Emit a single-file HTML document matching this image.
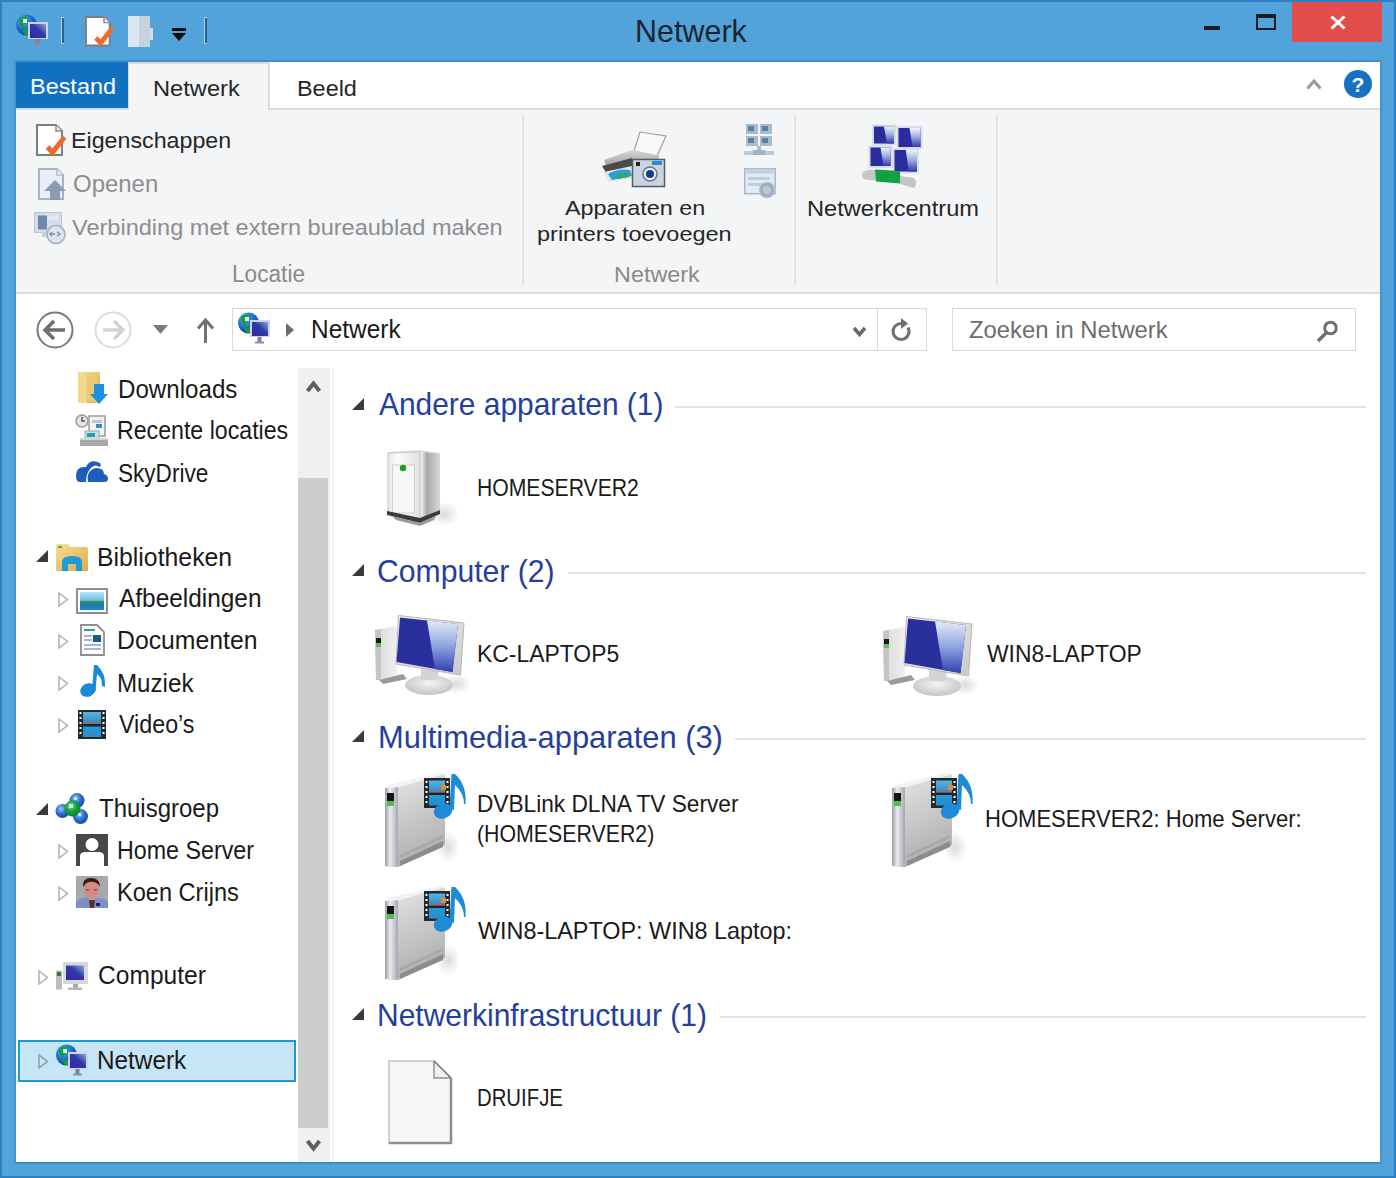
<!DOCTYPE html>
<html><head><meta charset="utf-8">
<style>
html,body{margin:0;padding:0;}
body{width:1396px;height:1178px;overflow:hidden;position:relative;background:#2d80c1;font-family:"Liberation Sans",sans-serif;}
.a{position:absolute;}
.t{position:absolute;white-space:nowrap;transform-origin:0 0;font-family:"Liberation Sans",sans-serif;}
svg{position:absolute;overflow:visible;}
</style></head><body>
<!-- frame -->
<div class="a" style="left:2px;top:2px;width:1392px;height:1174px;background:#52a3da"></div>
<!-- window content area -->
<div class="a" style="left:16px;top:62px;width:1364px;height:1100px;background:#fff"></div>
<div class="a" style="left:16px;top:1162px;width:1364px;height:2px;background:#3a8dcc"></div>
<div class="a" style="left:14px;top:60px;width:2px;height:1104px;background:#4393d0"></div>
<div class="a" style="left:1380px;top:60px;width:2px;height:1104px;background:#4393d0"></div>
<div class="a" style="left:16px;top:108px;width:112px;height:2px;background:#dcdfe1"></div>

<!-- close / max / min -->
<div class="a" style="left:1292px;top:2px;width:90px;height:40px;background:#e24e4b"></div>
<svg style="left:1330px;top:15px" width="16" height="15"><path d="M1.5 1.5 L14.5 13.5 M14.5 1.5 L1.5 13.5" stroke="#fff" stroke-width="3"/></svg>
<div class="a" style="left:1256px;top:14px;width:16px;height:10px;border:2px solid #1b1f24;border-top-width:4px"></div>
<div class="a" style="left:1204px;top:26px;width:16px;height:4px;background:#1b1f24"></div>

<!-- quick access separators -->
<div class="a" style="left:61px;top:17px;width:3px;height:27px;background:#a9d3ef"></div>
<div class="a" style="left:62px;top:18px;width:2px;height:25px;background:#2f5f86"></div>
<div class="a" style="left:204px;top:17px;width:3px;height:27px;background:#a9d3ef"></div>
<div class="a" style="left:205px;top:18px;width:2px;height:25px;background:#2f5f86"></div>
<!-- qat dropdown -->
<div class="a" style="left:172px;top:28px;width:14px;height:3px;background:#0d0d0d"></div>
<svg style="left:172px;top:33px" width="14" height="9"><path d="M0 0 H14 L7 8 Z" fill="#0d0d0d"/></svg>

<!-- tabs -->
<div class="a" style="left:16px;top:62px;width:112px;height:46px;background:#1270c0"></div>
<div class="a" style="left:16px;top:60px;width:1364px;height:2px;background:#3f8fcd"></div>
<div class="a" style="left:128px;top:62px;width:142px;height:48px;background:#dadbdc"></div>
<div class="a" style="left:129px;top:64px;width:139px;height:46px;background:#f4f5f7"></div>
<div class="a" style="left:270px;top:108px;width:1110px;height:2px;background:#dadbdc"></div>
<!-- collapse + help -->
<svg style="left:1306px;top:77px" width="16" height="13"><path d="M1.5 11.5 L8 4 L14.5 11.5" stroke="#9a9a9a" stroke-width="3" fill="none"/></svg>
<svg style="left:1344px;top:70px" width="28" height="28"><circle cx="14" cy="14" r="14" fill="#1671c0"/><text x="14" y="22" font-family="Liberation Sans" font-weight="bold" font-size="21" fill="#fff" text-anchor="middle">?</text></svg>

<!-- ribbon body -->
<div class="a" style="left:16px;top:110px;width:1364px;height:182px;background:#f4f5f7"></div>
<div class="a" style="left:16px;top:292px;width:1364px;height:2px;background:#dcdddf"></div>
<div class="a" style="left:522px;top:114px;width:2px;height:172px;background:#e3e4e6"></div>
<div class="a" style="left:794px;top:114px;width:2px;height:172px;background:#e3e4e6"></div>
<div class="a" style="left:996px;top:114px;width:2px;height:172px;background:#e3e4e6"></div>

<!-- address row -->
<div class="a" style="left:232px;top:308px;width:693px;height:41px;border:1px solid #d9d9d9;background:#fff"></div>
<div class="a" style="left:877px;top:309px;width:1px;height:41px;background:#d9d9d9"></div>
<div class="a" style="left:952px;top:308px;width:402px;height:41px;border:1px solid #d9d9d9;background:#fff"></div>
<!-- back / forward -->
<svg style="left:36px;top:311px" width="38" height="38"><circle cx="19" cy="19" r="17.5" stroke="#7a7a7a" stroke-width="2" fill="none"/><path d="M9 19 H29 M18 10 L9 19 L18 28" stroke="#6e6e6e" stroke-width="3.5" fill="none"/></svg>
<svg style="left:94px;top:311px" width="38" height="38"><circle cx="19" cy="19" r="17.5" stroke="#dcdcdc" stroke-width="2" fill="none"/><path d="M9 19 H29 M20 10 L29 19 L20 28" stroke="#d4d4d4" stroke-width="3.5" fill="none"/></svg>
<svg style="left:153px;top:325px" width="15" height="9"><path d="M0 0 H15 L7.5 9 Z" fill="#7b7b7b"/></svg>
<svg style="left:196px;top:318px" width="19" height="25"><path d="M9.5 3 V25 M2 10.5 L9.5 2 L17 10.5" stroke="#717171" stroke-width="3" fill="none"/></svg>
<svg style="left:285px;top:323px" width="10" height="14"><path d="M1 0 L9 7 L1 14 Z" fill="#6c6c6c"/></svg>
<svg style="left:852px;top:326px" width="15" height="11"><path d="M2 2 L7.5 8.5 L13 2" stroke="#6a6a6a" stroke-width="3.5" fill="none"/></svg>
<svg style="left:891px;top:318px" width="22" height="24"><path d="M17 9.5 A8 8 0 1 1 11 5.5" stroke="#707070" stroke-width="3" fill="none"/><path d="M10 0 L17 5.5 L10 11 Z" fill="#707070"/></svg>
<svg style="left:1316px;top:320px" width="23" height="22"><circle cx="14.5" cy="8" r="5.8" stroke="#707070" stroke-width="3" fill="none"/><path d="M10.5 12.5 L2 21" stroke="#707070" stroke-width="3.5"/></svg>

<!-- nav scrollbar -->
<div class="a" style="left:298px;top:368px;width:32px;height:794px;background:#f0f0f0"></div>
<div class="a" style="left:298px;top:478px;width:30px;height:650px;background:#cdcdcd"></div>
<div class="a" style="left:332px;top:368px;width:2px;height:794px;background:#f4f4f4"></div>
<svg style="left:306px;top:380px" width="15" height="12"><path d="M1.5 11 L7.5 3.5 L13.5 11" stroke="#5f5f5f" stroke-width="4" fill="none"/></svg>
<svg style="left:306px;top:1140px" width="15" height="12"><path d="M1.5 1 L7.5 8.5 L13.5 1" stroke="#5f5f5f" stroke-width="4" fill="none"/></svg>

<!-- selection -->
<div class="a" style="left:18px;top:1040px;width:274px;height:38px;background:#c6e5f6;border:2px solid #1e97d4"></div>

<!-- nav triangles -->
<svg style="left:36px;top:550px" width="12" height="12"><path d="M12 0 V12 H0 Z" fill="#3a3a3a"/></svg>
<svg style="left:36px;top:803px" width="12" height="12"><path d="M12 0 V12 H0 Z" fill="#3a3a3a"/></svg>
<svg style="left:58px;top:592px" width="11" height="15"><path d="M1 1 L9.5 7.5 L1 14 Z" stroke="#b0b0b0" stroke-width="1.5" fill="none"/></svg>
<svg style="left:58px;top:634px" width="11" height="15"><path d="M1 1 L9.5 7.5 L1 14 Z" stroke="#b0b0b0" stroke-width="1.5" fill="none"/></svg>
<svg style="left:58px;top:676px" width="11" height="15"><path d="M1 1 L9.5 7.5 L1 14 Z" stroke="#b0b0b0" stroke-width="1.5" fill="none"/></svg>
<svg style="left:58px;top:718px" width="11" height="15"><path d="M1 1 L9.5 7.5 L1 14 Z" stroke="#b0b0b0" stroke-width="1.5" fill="none"/></svg>
<svg style="left:58px;top:844px" width="11" height="15"><path d="M1 1 L9.5 7.5 L1 14 Z" stroke="#b0b0b0" stroke-width="1.5" fill="none"/></svg>
<svg style="left:58px;top:886px" width="11" height="15"><path d="M1 1 L9.5 7.5 L1 14 Z" stroke="#b0b0b0" stroke-width="1.5" fill="none"/></svg>
<svg style="left:38px;top:970px" width="11" height="15"><path d="M1 1 L9.5 7.5 L1 14 Z" stroke="#b0b0b0" stroke-width="1.5" fill="none"/></svg>
<svg style="left:38px;top:1054px" width="11" height="15"><path d="M1 1 L9.5 7.5 L1 14 Z" stroke="#8fa4b0" stroke-width="1.6" fill="none"/></svg>

<!-- content group headers -->
<svg style="left:352px;top:398px" width="12" height="12"><path d="M12 0 V12 H0 Z" fill="#3a3a3a"/></svg>
<svg style="left:352px;top:564px" width="12" height="12"><path d="M12 0 V12 H0 Z" fill="#3a3a3a"/></svg>
<svg style="left:352px;top:730px" width="12" height="12"><path d="M12 0 V12 H0 Z" fill="#3a3a3a"/></svg>
<svg style="left:352px;top:1008px" width="12" height="12"><path d="M12 0 V12 H0 Z" fill="#3a3a3a"/></svg>
<div class="a" style="left:675px;top:406px;width:691px;height:2px;background:#e2e2e2"></div>
<div class="a" style="left:568px;top:572px;width:798px;height:2px;background:#e2e2e2"></div>
<div class="a" style="left:735px;top:738px;width:631px;height:2px;background:#e2e2e2"></div>
<div class="a" style="left:720px;top:1016px;width:646px;height:2px;background:#e2e2e2"></div>

<svg style="left:0;top:0" width="1396" height="1178">
<defs>
<radialGradient id="gGlobe" cx="0.35" cy="0.3" r="0.8"><stop offset="0" stop-color="#3fb0f0"/><stop offset="0.6" stop-color="#1a64c0"/><stop offset="1" stop-color="#133f9a"/></radialGradient>
<linearGradient id="gScreen" x1="0" y1="1" x2="1" y2="0"><stop offset="0" stop-color="#3b249a"/><stop offset="0.55" stop-color="#2e3aa8"/><stop offset="1" stop-color="#8ea6dc"/></linearGradient>
<linearGradient id="gScreenHi" x1="0" y1="0" x2="0" y2="1"><stop offset="0" stop-color="#e4ecf8"/><stop offset="0.5" stop-color="#8ea3de"/><stop offset="1" stop-color="#3140b0"/></linearGradient>
<linearGradient id="gFrame" x1="0" y1="0" x2="1" y2="1"><stop offset="0" stop-color="#f4f4f4"/><stop offset="1" stop-color="#c8c8c8"/></linearGradient>
<linearGradient id="gTower" x1="0" y1="0" x2="1" y2="0"><stop offset="0" stop-color="#d8d8d8"/><stop offset="1" stop-color="#f0f0f0"/></linearGradient>
<radialGradient id="gBase" cx="0.5" cy="0.4" r="0.6"><stop offset="0" stop-color="#f4f4f4"/><stop offset="1" stop-color="#c4c4c4"/></radialGradient>
<linearGradient id="gSrvFront" x1="0" y1="0" x2="1" y2="0"><stop offset="0" stop-color="#e6e6e6"/><stop offset="0.3" stop-color="#fbfbfb"/><stop offset="1" stop-color="#e2e2e2"/></linearGradient>
<linearGradient id="gSrvSide" x1="0" y1="0" x2="1" y2="0"><stop offset="0" stop-color="#f2f2f2"/><stop offset="0.3" stop-color="#a8a8a8"/><stop offset="1" stop-color="#d8d8d8"/></linearGradient>
<linearGradient id="gMsSide" x1="0" y1="0" x2="0.3" y2="1"><stop offset="0" stop-color="#e8e8e8"/><stop offset="1" stop-color="#b0b0b0"/></linearGradient>
<linearGradient id="gMsFront" x1="0" y1="0" x2="1" y2="0"><stop offset="0" stop-color="#9a9aa2"/><stop offset="0.4" stop-color="#ececf2"/><stop offset="1" stop-color="#a6a6ae"/></linearGradient>
<linearGradient id="gFilm" x1="0" y1="0" x2="0" y2="1"><stop offset="0" stop-color="#5ab4e0"/><stop offset="0.4" stop-color="#3a8cc8"/><stop offset="0.47" stop-color="#c0604a"/><stop offset="0.5" stop-color="#222"/><stop offset="0.56" stop-color="#222"/><stop offset="0.6" stop-color="#1e9ad8"/><stop offset="1" stop-color="#2b8ccc"/></linearGradient>
<linearGradient id="gFolder" x1="0" y1="0" x2="1" y2="1"><stop offset="0" stop-color="#f6dc94"/><stop offset="1" stop-color="#dcae4a"/></linearGradient>
<linearGradient id="gSky" x1="0" y1="0" x2="0" y2="1"><stop offset="0" stop-color="#bfe4f6"/><stop offset="0.45" stop-color="#6cc0e6"/><stop offset="0.55" stop-color="#2e8a4a"/><stop offset="0.7" stop-color="#1f74b6"/><stop offset="1" stop-color="#1a8bd0"/></linearGradient>
<linearGradient id="gPrinterTop" x1="0" y1="0" x2="0" y2="1"><stop offset="0" stop-color="#d8d8d8"/><stop offset="1" stop-color="#7a7a7a"/></linearGradient>
<linearGradient id="gNc" x1="0" y1="0" x2="1" y2="0"><stop offset="0" stop-color="#1a2a90"/><stop offset="0.55" stop-color="#2636a8"/><stop offset="1" stop-color="#e4e8f6"/></linearGradient>
<radialGradient id="gShadow"><stop offset="0" stop-color="#000" stop-opacity="0.14"/><stop offset="1" stop-color="#000" stop-opacity="0"/></radialGradient>
<linearGradient id="gNcHi" x1="0" y1="0" x2="0" y2="1"><stop offset="0" stop-color="#f0f4fc"/><stop offset="0.45" stop-color="#9fb0e0"/><stop offset="1" stop-color="#2c3aa8"/></linearGradient>
<radialGradient id="gBall" cx="0.4" cy="0.35" r="0.7"><stop offset="0" stop-color="#9cc8f4"/><stop offset="0.5" stop-color="#2f6fd0"/><stop offset="1" stop-color="#1a3ea8"/></radialGradient><radialGradient id="gBallG" cx="0.4" cy="0.35" r="0.7"><stop offset="0" stop-color="#7ee08a"/><stop offset="0.5" stop-color="#14a040"/><stop offset="1" stop-color="#0b7a2e"/></radialGradient>
</defs>
<g transform="translate(16,14) scale(1.0)">
<circle cx="10.5" cy="11" r="10.5" fill="url(#gGlobe)"/>
<path d="M3 6 Q6 2 11 3 L12 8 Q8 10 7 14 Q4 12 3 6 Z" fill="#12a03a"/>
<path d="M6 16 Q10 14 12 17 L12 21.5 Q8 21 6 16 Z" fill="#12a03a"/>
<rect x="7" y="5" width="4" height="4" fill="#e8f4e0"/>
<rect x="12" y="8" width="20" height="17" fill="#cfd3ea"/>
<rect x="14" y="10" width="16" height="14" fill="url(#gScreen)"/>
<rect x="19.5" y="25" width="4" height="5" fill="#7e8296"/>
<rect x="17" y="29.5" width="9" height="2" fill="#8e92a6"/>
</g>
<g transform="translate(85,16) scale(0.95)">
<path d="M1 1 H20 L26 7 V31 H1 Z" fill="#fff" stroke="#7d7d7d" stroke-width="2"/>
<path d="M20 1 V7 H26" fill="#eee" stroke="#8a8a8a" stroke-width="1.5"/>
<path d="M11.5 23 L16.5 28.5 L28.5 13" stroke="#f0682a" stroke-width="5" fill="none"/>
</g>
<rect x="128" y="16" width="11" height="31" fill="#dbe6f0"/><rect x="139" y="16" width="11" height="31" fill="#c5d3e0"/><rect x="150" y="28" width="3" height="12" fill="#d0dde8"/>
<g transform="translate(36,124) scale(1.0)">
<path d="M1 1 H20 L26 7 V31 H1 Z" fill="#fff" stroke="#7d7d7d" stroke-width="2"/>
<path d="M20 1 V7 H26" fill="#eee" stroke="#8a8a8a" stroke-width="1.5"/>
<path d="M11.5 23 L16.5 28.5 L28.5 13" stroke="#f0682a" stroke-width="5" fill="none"/>
</g>
<g transform="translate(38,168)"><path d="M1 1 H19 L25 7 V31 H1 Z" fill="#e8eef6" stroke="#a7b3c1" stroke-width="2"/><path d="M19 1 V7 H25" fill="#f4f4f4" stroke="#b0bac6" stroke-width="1.5"/><path d="M6 23 L17 12 L28 23 H22 V32 H12 V23 Z" fill="#8c9bb0"/></g>
<g transform="translate(34,212)"><rect x="0.5" y="0.5" width="27" height="20" fill="#d4dde8" stroke="#bcc6d2"/><rect x="4" y="3.5" width="9" height="14" fill="#6e88aa"/><rect x="13" y="3.5" width="11" height="5" fill="#e2e8ef"/><rect x="8" y="20" width="10" height="5" fill="#c8d0da"/><circle cx="22" cy="22.5" r="9" fill="#dde4ec" stroke="#a6b2c0" stroke-width="1.6"/><path d="M17 22 h4 M23 20 l3 2 l-3 2 M18 20 l-2 2 l2 2" stroke="#7d8ea4" stroke-width="1.4" fill="none"/></g>
<g transform="translate(602,132)">
<path d="M38 0 L64 4 L55 24 L32 19 Z" fill="#f8f8f8" stroke="#a0a0a0" stroke-width="1.2"/>
<path d="M2 28 L30 18 L58 24 L50 38 L8 46 Z" fill="url(#gPrinterTop)"/>
<path d="M0 34 L30 26 L36 34 L6 44 Z" fill="#4a4a4a"/>
<path d="M2 40 L30 34 L32 46 L6 50 Z" fill="#dfe7ee"/>
<path d="M6 42 Q16 36 28 38 L30 44 L10 48 Z" fill="#2aa0d8"/>
<path d="M14 43 Q20 40 26 41 L27 45 L16 47 Z" fill="#30a868"/>
<rect x="30.5" y="27.5" width="32" height="27" fill="#c8d4de" stroke="#545d66" stroke-width="1.5"/>
<rect x="50" y="29" width="10" height="4" fill="#2a8ad0"/>
<rect x="34" y="30" width="4" height="4" fill="#222"/>
<circle cx="48" cy="42" r="7" fill="#e8eef4" stroke="#6a7884" stroke-width="1.5"/>
<circle cx="48" cy="42" r="4" fill="#0f3f8a"/>
</g>
<g transform="translate(744,124)" fill="#a9bccf">
<rect x="2" y="0" width="12" height="10"/><rect x="16" y="0" width="12" height="10"/>
<rect x="2" y="12" width="12" height="10"/><rect x="16" y="12" width="12" height="10"/>
<rect x="4" y="2" width="6" height="5" fill="#5d7fa6"/><rect x="18" y="2" width="6" height="5" fill="#5d7fa6"/>
<rect x="4" y="14" width="6" height="5" fill="#5d7fa6"/><rect x="18" y="14" width="6" height="5" fill="#5d7fa6"/>
<rect x="13" y="22" width="4" height="5"/><rect x="0" y="27" width="30" height="4" fill="#bccbdb"/><rect x="9" y="26" width="12" height="5" fill="#9eb2c6"/>
</g>
<g transform="translate(744,168)">
<rect x="0.75" y="0.75" width="30.5" height="25" fill="#e2eaf3" stroke="#aab9ca" stroke-width="1.5"/>
<rect x="1.5" y="1.5" width="29" height="4" fill="#c3d1df"/>
<rect x="4" y="9" width="22" height="3" fill="#bfccda"/><rect x="4" y="15" width="14" height="3" fill="#bfccda"/>
<circle cx="23" cy="22" r="8" fill="#9fb0c4" stroke="#c8d4e0" stroke-width="1"/><circle cx="23" cy="22" r="4" fill="#b9c8d6"/>
</g>
<g><rect x="872" y="124.5" width="24" height="21.0" fill="#d9dde8"/><rect x="874" y="126.5" width="20" height="17.0" fill="#2b2c9e"/><path d="M884.0 126.5 H894 V143.5 H887.0 Z" fill="url(#gNcHi)"/><rect x="896.5" y="126" width="26.0" height="23" fill="#d9dde8"/><rect x="898.5" y="128" width="22.0" height="19" fill="#2b2c9e"/><path d="M909.5 128 H920.5 V147 H912.5 Z" fill="url(#gNcHi)"/><rect x="868.5" y="145.5" width="24.0" height="22.5" fill="#d9dde8"/><rect x="870.5" y="147.5" width="20.0" height="18.5" fill="#2b2c9e"/><path d="M880.5 147.5 H890.5 V166 H883.5 Z" fill="url(#gNcHi)"/><rect x="892.5" y="148" width="26.5" height="25.5" fill="#d9dde8"/><rect x="894.5" y="150" width="22.5" height="21.5" fill="#2b2c9e"/><path d="M905.8 150 H917 V171.5 H908.8 Z" fill="url(#gNcHi)"/><path d="M862 174 Q864 169 875 170 L876 180 Q865 181 862 177 Z" fill="#c4c9c8"/><path d="M875 169.5 L900 171 L900 183.5 L876 181.5 Z" fill="#12a040"/><path d="M900 176 L914 178 Q918 183 914 188 L900 184 Z" fill="#c0c6c4"/></g>
<g transform="translate(238,312) scale(1.0)">
<circle cx="10.5" cy="11" r="10.5" fill="url(#gGlobe)"/>
<path d="M3 6 Q6 2 11 3 L12 8 Q8 10 7 14 Q4 12 3 6 Z" fill="#12a03a"/>
<path d="M6 16 Q10 14 12 17 L12 21.5 Q8 21 6 16 Z" fill="#12a03a"/>
<rect x="7" y="5" width="4" height="4" fill="#e8f4e0"/>
<rect x="12" y="8" width="20" height="17" fill="#cfd3ea"/>
<rect x="14" y="10" width="16" height="14" fill="url(#gScreen)"/>
<rect x="19.5" y="25" width="4" height="5" fill="#7e8296"/>
<rect x="17" y="29.5" width="9" height="2" fill="#8e92a6"/>
</g>
<g transform="translate(78,372)">
<path d="M0 0 H22 V31 H0 Z" fill="url(#gFolder)"/>
<path d="M9 3 L19 6 V31 L9 28 Z" fill="#ecc872"/><path d="M0 0 L9 3 V31 L0 31 Z" fill="#f4d88a"/>
<path d="M16 12 H26 V22 H30 L21 32 L12 22 H16 Z" fill="#1a90e0"/>
</g>
<g transform="translate(76,414)">
<circle cx="6" cy="7" r="6" fill="#e4e4e4" stroke="#9a9a9a" stroke-width="1.5"/><path d="M6 3 V7 H9" stroke="#555" stroke-width="1.4" fill="none"/>
<rect x="13" y="2" width="16" height="20" fill="#f2f2f2" stroke="#9a9a9a" stroke-width="1.5"/>
<rect x="16" y="6" width="10" height="3" fill="#b8c8d8"/><rect x="20" y="10" width="6" height="4" fill="#3a8ac8"/>
<rect x="9" y="17" width="14" height="8" fill="#bfe0ec" stroke="#9aa" stroke-width="1"/><rect x="11" y="19" width="8" height="4" fill="#24a0a8"/>
<rect x="4" y="24" width="28" height="8" fill="#a9a9a9"/><rect x="4" y="24" width="28" height="2" fill="#d4d4d4"/>
</g>
<path d="M76 476 Q76 466 86 467 Q90 458 100 463 Q102 466 99 467 Q95 463 90 469 Q86 474 86 482 H80 Q76 482 76 476 Z M88 482 Q86 470 96 468 Q104 468 104 474 Q108 475 108 479 Q108 482 104 482 Z" fill="#1f5dbd"/>
<g transform="translate(56,544)">
<path d="M0 2 Q0 0 2 0 H12 L14 3 H30 Q32 3 32 5 V27 H0 Z" fill="url(#gFolder)"/>
<rect x="2" y="2" width="4" height="2" fill="#4caf50"/>
<path d="M6 27 V18 Q6 12 16 12 Q26 12 26 18 V27 H20 V20 H12 V27 Z" fill="#1e9ad8"/>
</g>
<g transform="translate(76,588)"><rect x="1" y="1" width="30" height="24" fill="#fff" stroke="#8d8d8d" stroke-width="2"/><rect x="4" y="4" width="24" height="18" fill="url(#gSky)"/></g>
<g transform="translate(80,624)"><path d="M1 1 H17 L24 8 V31 H1 Z" fill="#fff" stroke="#8d8d8d" stroke-width="1.8"/>
<rect x="4" y="5" width="11" height="2" fill="#2aa0a8"/><rect x="4" y="11" width="8" height="2" fill="#a9b4d8"/><rect x="4" y="15" width="8" height="2" fill="#a9b4d8"/><rect x="13" y="11" width="8" height="7" fill="#1c5a8a"/><rect x="4" y="20" width="17" height="2" fill="#a9b4d8"/><rect x="4" y="24" width="17" height="2" fill="#a9b4d8"/></g>
<g transform="translate(80,665)"><ellipse cx="8" cy="25" rx="8" ry="6.5" fill="#1a8ad6" transform="rotate(-25 8 25)"/><path d="M12 25 L14 0 H17 Q26 8 25 22 L22 21 Q22 12 17 9 L15.5 26 Z" fill="#1a8ad6"/></g>
<g transform="translate(78,710)"><rect x="0" y="0" width="28" height="29" fill="#232a2e"/><rect x="5" y="2" width="18" height="25" fill="url(#gFilm)"/>
<path d="M1.5 2 h2 v2 h-2z M1.5 7 h2 v2 h-2z M1.5 12 h2 v2 h-2z M1.5 17 h2 v2 h-2z M1.5 22 h2 v2 h-2z M24.5 2 h2 v2 h-2z M24.5 7 h2 v2 h-2z M24.5 12 h2 v2 h-2z M24.5 17 h2 v2 h-2z M24.5 22 h2 v2 h-2z" fill="#fff"/></g>
<g><circle cx="62.5" cy="811" r="7" fill="url(#gBall)"/><circle cx="77" cy="800.5" r="7.5" fill="url(#gBall)"/><circle cx="80.5" cy="816.5" r="7.5" fill="url(#gBall)"/><circle cx="72.5" cy="808.5" r="8" fill="url(#gBallG)"/><rect x="69" y="804" width="4" height="4" fill="#d8f0d0"/><rect x="74" y="797" width="3" height="3" fill="#cfe0f8"/><rect x="78" y="813" width="3" height="3" fill="#cfe0f8"/></g>
<g><rect x="76" y="834" width="32" height="32" fill="#474747"/><circle cx="92" cy="844.5" r="6.5" fill="#fff"/><path d="M80 866 V856 Q80 852 86 852 H98 Q104 852 104 856 V866 Z" fill="#fff"/></g>
<g><rect x="76" y="876" width="32" height="32" fill="#a7a8b0"/><path d="M76 908 V902 Q82 897 88 898 L92 904 L96 898 Q102 897 108 902 V908 Z" fill="#7d8fc8"/><path d="M89 900 L95 900 L94 908 L90 908 Z" fill="#5a3028"/><rect x="96" y="903" width="4" height="3" fill="#1a2060"/><ellipse cx="91.5" cy="889.5" rx="7.5" ry="9.5" fill="#d68a84"/><path d="M83 887 Q82 878 91 878 Q100 878 100 887 L98 884 Q94 881 90 882 Q86 882 84 886 Z" fill="#3a1a12"/><rect x="86" y="889" width="3" height="1.5" fill="#8a4a40"/><rect x="94" y="889" width="3" height="1.5" fill="#8a4a40"/></g>
<g transform="translate(56,962)">
<rect x="0" y="8.5" width="6" height="19" fill="#bdbdbd"/>
<rect x="1" y="10" width="4" height="4" fill="#2c7a34"/>
<rect x="7" y="0" width="25" height="22" fill="#d8d8d8"/>
<rect x="10" y="3.5" width="18" height="14.5" fill="url(#gScreen)"/>
<rect x="17" y="22" width="5" height="4" fill="#a8a8a8"/>
<rect x="12" y="25.5" width="14" height="2.5" fill="#b8b8b8"/>
</g>
<g transform="translate(56,1044) scale(1.0)">
<circle cx="10.5" cy="11" r="10.5" fill="url(#gGlobe)"/>
<path d="M3 6 Q6 2 11 3 L12 8 Q8 10 7 14 Q4 12 3 6 Z" fill="#12a03a"/>
<path d="M6 16 Q10 14 12 17 L12 21.5 Q8 21 6 16 Z" fill="#12a03a"/>
<rect x="7" y="5" width="4" height="4" fill="#e8f4e0"/>
<rect x="12" y="8" width="20" height="17" fill="#cfd3ea"/>
<rect x="14" y="10" width="16" height="14" fill="url(#gScreen)"/>
<rect x="19.5" y="25" width="4" height="5" fill="#7e8296"/>
<rect x="17" y="29.5" width="9" height="2" fill="#8e92a6"/>
</g>
<g transform="translate(386,450)">
<ellipse cx="58" cy="64" rx="16" ry="12" fill="url(#gShadow)"/>
<path d="M2 2 L34 0 L54 3 L54 62 L34 72 L2 62 Z" fill="#dcdcdc"/>
<path d="M2 3 L34 2 L34 72 L2 62 Z" fill="url(#gSrvFront)" stroke="#c8c8c8" stroke-width="1"/>
<path d="M35 2 L54 4 L54 62 L35 72 Z" fill="url(#gSrvSide)"/>
<rect x="6.5" y="15" width="22" height="48" fill="#f6f6f6" stroke="#d0d0d0" stroke-width="1"/>
<circle cx="17" cy="18" r="3.2" fill="#1e9a2a"/>
<path d="M1 61 L34 68 L54 60 L54 64 L34 73 L1 65 Z" fill="#3c3c3c"/>
<path d="M6 66 L34 73 L50 66 L48 70 L34 76 L10 70 Z" fill="#9a9a9a"/>
</g>
<g transform="translate(373,614)">
<ellipse cx="84" cy="70" rx="14" ry="10" fill="url(#gShadow)"/>
<path d="M2 16 L24 12 L24 64 L3 66 Z" fill="url(#gTower)"/>
<path d="M2 16 L8 15 L8 66 L3 66 Z" fill="#c4c4c8"/>
<rect x="3" y="24" width="5" height="5" fill="#1c1c1c"/>
<rect x="3" y="29" width="5" height="4" fill="#58c250"/>
<path d="M6 66 L30 60 L34 65 L10 70 Z" fill="#9a9a9a"/>
<ellipse cx="56" cy="71" rx="24" ry="10" fill="url(#gBase)"/>
<path d="M48 55 L66 57 L64 66 L48 66 Z" fill="#d4d4d4"/>
<path d="M25.5 1.5 L91 9 L87.5 61 L23 50 Z" fill="url(#gFrame)" stroke="#b8b8b8" stroke-width="1"/>
<path d="M27 3.5 L85 10 L79.5 58 L23.5 48 Z" fill="#2a2f9e"/>
<path d="M54 6.5 L85 10 L79.5 58 L62 55 Z" fill="url(#gScreenHi)"/>
</g>
<g transform="translate(881,615)">
<ellipse cx="84" cy="70" rx="14" ry="10" fill="url(#gShadow)"/>
<path d="M2 16 L24 12 L24 64 L3 66 Z" fill="url(#gTower)"/>
<path d="M2 16 L8 15 L8 66 L3 66 Z" fill="#c4c4c8"/>
<rect x="3" y="24" width="5" height="5" fill="#1c1c1c"/>
<rect x="3" y="29" width="5" height="4" fill="#58c250"/>
<path d="M6 66 L30 60 L34 65 L10 70 Z" fill="#9a9a9a"/>
<ellipse cx="56" cy="71" rx="24" ry="10" fill="url(#gBase)"/>
<path d="M48 55 L66 57 L64 66 L48 66 Z" fill="#d4d4d4"/>
<path d="M25.5 1.5 L91 9 L87.5 61 L23 50 Z" fill="url(#gFrame)" stroke="#b8b8b8" stroke-width="1"/>
<path d="M27 3.5 L85 10 L79.5 58 L23.5 48 Z" fill="#2a2f9e"/>
<path d="M54 6.5 L85 10 L79.5 58 L62 55 Z" fill="url(#gScreenHi)"/>
</g>
<g transform="translate(384,773)">
<ellipse cx="64" cy="74" rx="12" ry="16" fill="url(#gShadow)"/>
<path d="M1 15 L14 14 L61 1 L61 72 L14 94 L1 93 Z" fill="url(#gMsSide)"/>
<path d="M1 15 L14 14 L14 94 L1 93 Z" fill="url(#gMsFront)"/>
<path d="M1 15 L14 14 L61 1 L55 0 L4 12 Z" fill="#f2f2f2"/>
<rect x="3" y="20" width="7" height="8" fill="#151515"/>
<rect x="3" y="28" width="7" height="5" fill="#52bf47"/>
<path d="M16 88 L59 68 L59 74 L16 93 Z" fill="#8c8c8c"/>
<path d="M16 82 L59 62 L59 65 L16 85 Z" fill="#a8a8a8"/>
<rect x="40" y="5" width="26" height="30" fill="#232a2e"/>
<rect x="45" y="7.5" width="16" height="25" fill="url(#gFilm)"/>
<path d="M41.5 8 h2 v2 h-2z M41.5 13 h2 v2 h-2z M41.5 18 h2 v2 h-2z M41.5 23 h2 v2 h-2z M41.5 28 h2 v2 h-2z M62.5 8 h2 v2 h-2z M62.5 13 h2 v2 h-2z M62.5 18 h2 v2 h-2z M62.5 23 h2 v2 h-2z M62.5 28 h2 v2 h-2z" fill="#fff"/>
<ellipse cx="59" cy="38" rx="9.5" ry="7.5" fill="#1d8bd6" transform="rotate(-20 59 38)"/>
<rect x="57" y="12" width="5" height="5" fill="#e88a30"/><path d="M65.5 36 L67.5 1 L71 1 Q83 12 81.5 31 L80 31 Q80 20 71 12 L70 37 Z" fill="#1d8bd6"/>
</g>
<g transform="translate(891,773)">
<ellipse cx="64" cy="74" rx="12" ry="16" fill="url(#gShadow)"/>
<path d="M1 15 L14 14 L61 1 L61 72 L14 94 L1 93 Z" fill="url(#gMsSide)"/>
<path d="M1 15 L14 14 L14 94 L1 93 Z" fill="url(#gMsFront)"/>
<path d="M1 15 L14 14 L61 1 L55 0 L4 12 Z" fill="#f2f2f2"/>
<rect x="3" y="20" width="7" height="8" fill="#151515"/>
<rect x="3" y="28" width="7" height="5" fill="#52bf47"/>
<path d="M16 88 L59 68 L59 74 L16 93 Z" fill="#8c8c8c"/>
<path d="M16 82 L59 62 L59 65 L16 85 Z" fill="#a8a8a8"/>
<rect x="40" y="5" width="26" height="30" fill="#232a2e"/>
<rect x="45" y="7.5" width="16" height="25" fill="url(#gFilm)"/>
<path d="M41.5 8 h2 v2 h-2z M41.5 13 h2 v2 h-2z M41.5 18 h2 v2 h-2z M41.5 23 h2 v2 h-2z M41.5 28 h2 v2 h-2z M62.5 8 h2 v2 h-2z M62.5 13 h2 v2 h-2z M62.5 18 h2 v2 h-2z M62.5 23 h2 v2 h-2z M62.5 28 h2 v2 h-2z" fill="#fff"/>
<ellipse cx="59" cy="38" rx="9.5" ry="7.5" fill="#1d8bd6" transform="rotate(-20 59 38)"/>
<rect x="57" y="12" width="5" height="5" fill="#e88a30"/><path d="M65.5 36 L67.5 1 L71 1 Q83 12 81.5 31 L80 31 Q80 20 71 12 L70 37 Z" fill="#1d8bd6"/>
</g>
<g transform="translate(384,886)">
<ellipse cx="64" cy="74" rx="12" ry="16" fill="url(#gShadow)"/>
<path d="M1 15 L14 14 L61 1 L61 72 L14 94 L1 93 Z" fill="url(#gMsSide)"/>
<path d="M1 15 L14 14 L14 94 L1 93 Z" fill="url(#gMsFront)"/>
<path d="M1 15 L14 14 L61 1 L55 0 L4 12 Z" fill="#f2f2f2"/>
<rect x="3" y="20" width="7" height="8" fill="#151515"/>
<rect x="3" y="28" width="7" height="5" fill="#52bf47"/>
<path d="M16 88 L59 68 L59 74 L16 93 Z" fill="#8c8c8c"/>
<path d="M16 82 L59 62 L59 65 L16 85 Z" fill="#a8a8a8"/>
<rect x="40" y="5" width="26" height="30" fill="#232a2e"/>
<rect x="45" y="7.5" width="16" height="25" fill="url(#gFilm)"/>
<path d="M41.5 8 h2 v2 h-2z M41.5 13 h2 v2 h-2z M41.5 18 h2 v2 h-2z M41.5 23 h2 v2 h-2z M41.5 28 h2 v2 h-2z M62.5 8 h2 v2 h-2z M62.5 13 h2 v2 h-2z M62.5 18 h2 v2 h-2z M62.5 23 h2 v2 h-2z M62.5 28 h2 v2 h-2z" fill="#fff"/>
<ellipse cx="59" cy="38" rx="9.5" ry="7.5" fill="#1d8bd6" transform="rotate(-20 59 38)"/>
<rect x="57" y="12" width="5" height="5" fill="#e88a30"/><path d="M65.5 36 L67.5 1 L71 1 Q83 12 81.5 31 L80 31 Q80 20 71 12 L70 37 Z" fill="#1d8bd6"/>
</g>
<g transform="translate(388,1060)">
<path d="M1 1 H46 L63 18 V83 H1 Z" fill="#f7f7f7" stroke="#cfcfcf" stroke-width="2"/>
<path d="M63 18 V83 H1" fill="none" stroke="#8e8e8e" stroke-width="2.5"/>
<path d="M46 1 V18 H63" fill="#f0f0f0" stroke="#a8a8a8" stroke-width="2"/>
<path d="M46 1 L63 18" stroke="#777" stroke-width="1.5"/>
</g>
</svg>
<div class='t' style='left:635.1px;top:14.9px;font-size:32.0px;line-height:32.0px;color:#1c2530;transform:scaleX(0.9526)'>Netwerk</div>
<div class='t' style='left:29.9px;top:75.5px;font-size:22.0px;line-height:22.0px;color:#ffffff;transform:scaleX(1.0649)'>Bestand</div>
<div class='t' style='left:152.8px;top:77.5px;font-size:22.0px;line-height:22.0px;color:#262626;transform:scaleX(1.0759)'>Netwerk</div>
<div class='t' style='left:297.1px;top:77.5px;font-size:22.0px;line-height:22.0px;color:#262626;transform:scaleX(1.0642)'>Beeld</div>
<div class='t' style='left:71.4px;top:129.5px;font-size:22.0px;line-height:22.0px;color:#262626;transform:scaleX(1.0561)'>Eigenschappen</div>
<div class='t' style='left:72.5px;top:172.8px;font-size:23.0px;line-height:23.0px;color:#8d8d8d;transform:scaleX(1.0418)'>Openen</div>
<div class='t' style='left:72.3px;top:217.4px;font-size:22.0px;line-height:22.0px;color:#8d8d8d;transform:scaleX(1.0701)'>Verbinding met extern bureaublad maken</div>
<div class='t' style='left:231.6px;top:262.9px;font-size:23.0px;line-height:23.0px;color:#8a8a8a;transform:scaleX(0.9845)'>Locatie</div>
<div class='t' style='left:564.6px;top:196.8px;font-size:21.0px;line-height:21.0px;color:#262626;transform:scaleX(1.1128)'>Apparaten en</div>
<div class='t' style='left:537.2px;top:223.1px;font-size:21.0px;line-height:21.0px;color:#262626;transform:scaleX(1.1192)'>printers toevoegen</div>
<div class='t' style='left:613.9px;top:263.6px;font-size:22.0px;line-height:22.0px;color:#8a8a8a;transform:scaleX(1.0633)'>Netwerk</div>
<div class='t' style='left:807.4px;top:198.5px;font-size:21.5px;line-height:21.5px;color:#262626;transform:scaleX(1.0987)'>Netwerkcentrum</div>
<div class='t' style='left:310.7px;top:316.0px;font-size:26.0px;line-height:26.0px;color:#1a1a1a;transform:scaleX(0.9398)'>Netwerk</div>
<div class='t' style='left:969.4px;top:317.5px;font-size:24.5px;line-height:24.5px;color:#6d6d6d;transform:scaleX(0.9729)'>Zoeken in Netwerk</div>
<div class='t' style='left:117.6px;top:376.6px;font-size:25.5px;line-height:25.5px;color:#1a1a1a;transform:scaleX(0.9463)'>Downloads</div>
<div class='t' style='left:117.2px;top:418.2px;font-size:25.5px;line-height:25.5px;color:#1a1a1a;transform:scaleX(0.9081)'>Recente locaties</div>
<div class='t' style='left:118.1px;top:460.7px;font-size:25.5px;line-height:25.5px;color:#1a1a1a;transform:scaleX(0.8850)'>SkyDrive</div>
<div class='t' style='left:96.8px;top:545.0px;font-size:25.5px;line-height:25.5px;color:#1a1a1a;transform:scaleX(0.9726)'>Bibliotheken</div>
<div class='t' style='left:118.8px;top:585.8px;font-size:25.5px;line-height:25.5px;color:#1a1a1a;transform:scaleX(0.9571)'>Afbeeldingen</div>
<div class='t' style='left:117.1px;top:628.4px;font-size:25.5px;line-height:25.5px;color:#1a1a1a;transform:scaleX(0.9716)'>Documenten</div>
<div class='t' style='left:117.1px;top:671.0px;font-size:25.5px;line-height:25.5px;color:#1a1a1a;transform:scaleX(0.9468)'>Muziek</div>
<div class='t' style='left:119.0px;top:712.0px;font-size:25.5px;line-height:25.5px;color:#1a1a1a;transform:scaleX(0.9122)'>Video’s</div>
<div class='t' style='left:98.6px;top:795.8px;font-size:25.5px;line-height:25.5px;color:#1a1a1a;transform:scaleX(0.9405)'>Thuisgroep</div>
<div class='t' style='left:116.6px;top:838.0px;font-size:25.5px;line-height:25.5px;color:#1a1a1a;transform:scaleX(0.9122)'>Home Server</div>
<div class='t' style='left:116.6px;top:880.0px;font-size:25.5px;line-height:25.5px;color:#1a1a1a;transform:scaleX(0.9240)'>Koen Crijns</div>
<div class='t' style='left:98.0px;top:963.0px;font-size:25.5px;line-height:25.5px;color:#1a1a1a;transform:scaleX(0.9640)'>Computer</div>
<div class='t' style='left:97.1px;top:1048.0px;font-size:25.5px;line-height:25.5px;color:#1a1a1a;transform:scaleX(0.9538)'>Netwerk</div>
<div class='t' style='left:378.5px;top:389.0px;font-size:30.5px;line-height:30.5px;color:#24409c;transform:scaleX(0.9809)'>Andere apparaten (1)</div>
<div class='t' style='left:376.7px;top:555.5px;font-size:30.5px;line-height:30.5px;color:#24409c;transform:scaleX(0.9886)'>Computer (2)</div>
<div class='t' style='left:377.5px;top:722.0px;font-size:30.5px;line-height:30.5px;color:#24409c;transform:scaleX(1.0122)'>Multimedia-apparaten (3)</div>
<div class='t' style='left:377.0px;top:999.5px;font-size:30.5px;line-height:30.5px;color:#24409c;transform:scaleX(0.9834)'>Netwerkinfrastructuur (1)</div>
<div class='t' style='left:477.3px;top:476.0px;font-size:24.5px;line-height:24.5px;color:#1a1a1a;transform:scaleX(0.8630)'>HOMESERVER2</div>
<div class='t' style='left:477.3px;top:642.0px;font-size:24.5px;line-height:24.5px;color:#1a1a1a;transform:scaleX(0.9349)'>KC-LAPTOP5</div>
<div class='t' style='left:987.0px;top:642.0px;font-size:24.5px;line-height:24.5px;color:#1a1a1a;transform:scaleX(0.9341)'>WIN8-LAPTOP</div>
<div class='t' style='left:476.5px;top:792.0px;font-size:24.0px;line-height:24.0px;color:#1a1a1a;transform:scaleX(0.9440)'>DVBLink DLNA TV Server</div>
<div class='t' style='left:477.1px;top:821.9px;font-size:24.0px;line-height:24.0px;color:#1a1a1a;transform:scaleX(0.8883)'>(HOMESERVER2)</div>
<div class='t' style='left:985.2px;top:807.3px;font-size:24.0px;line-height:24.0px;color:#1a1a1a;transform:scaleX(0.9179)'>HOMESERVER2: Home Server:</div>
<div class='t' style='left:478.0px;top:919.0px;font-size:24.0px;line-height:24.0px;color:#1a1a1a;transform:scaleX(0.9744)'>WIN8-LAPTOP: WIN8 Laptop:</div>
<div class='t' style='left:477.3px;top:1085.8px;font-size:24.5px;line-height:24.5px;color:#1a1a1a;transform:scaleX(0.8300)'>DRUIFJE</div>
</body></html>
